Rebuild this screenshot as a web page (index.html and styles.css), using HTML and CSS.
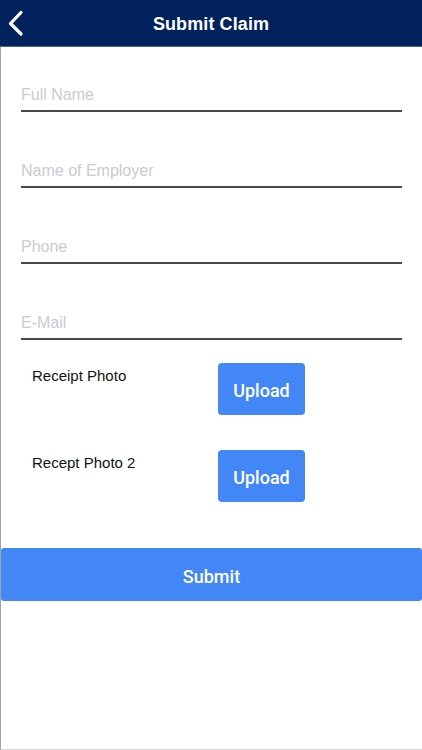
FILE: index.html
```html
<!DOCTYPE html>
<html lang="en">
<head>
<meta charset="utf-8">
<title>Submit Claim</title>
<link rel="stylesheet" href="styles.css">
</head>
<body>
<div class="screen">
  <header class="topbar">
    <button class="back" aria-label="Back">
      <svg width="30" height="46" viewBox="0 0 30 46" aria-hidden="true">
        <polyline points="21,12.5 10.5,23.5 21,34" fill="none" stroke="#ffffff" stroke-width="3.2" stroke-linecap="round" stroke-linejoin="round"/>
      </svg>
    </button>
    <h1 class="title">Submit Claim</h1>
  </header>
  <main class="content">
    <form class="form">
      <div class="field"><input class="input" type="text" placeholder="Full Name"></div>
      <div class="field"><input class="input" type="text" placeholder="Name of Employer"></div>
      <div class="field"><input class="input" type="tel" placeholder="Phone"></div>
      <div class="field"><input class="input" type="email" placeholder="E-Mail"></div>

      <div class="upload-row">
        <span class="upload-label">Receipt Photo</span>
        <button type="button" class="upload-btn">Upload</button>
      </div>
      <div class="upload-row">
        <span class="upload-label">Recept Photo 2</span>
        <button type="button" class="upload-btn">Upload</button>
      </div>

      <button type="button" class="submit-btn">Submit</button>
    </form>
  </main>
</div>
</body>
</html>
```

FILE: styles.css
```css
* { box-sizing: border-box; }

html, body {
  margin: 0;
  padding: 0;
  background: #ffffff;
}

body {
  font-family: "Liberation Sans", Arial, Helvetica, sans-serif;
  color: #111111;
}

.screen {
  width: 422px;
  height: 750px;
  display: flex;
  flex-direction: column;
  overflow: hidden;
}

.topbar {
  height: 47px;
  flex: 0 0 47px;
  background: #01225d;
  border-bottom: 1px solid #4d6490;
  display: flex;
  align-items: center;
  justify-content: center;
  position: relative;
}

.back {
  position: absolute;
  left: 0;
  top: 0;
  width: 30px;
  height: 46px;
  padding: 0;
  border: 0;
  background: transparent;
  display: flex;
}

.title {
  margin: 0;
  padding-top: 2px;
  color: #ffffff;
  font-size: 18px;
  font-weight: 700;
  line-height: 44px;
  letter-spacing: 0.1px;
}

.content {
  flex: 1;
  border-left: 1px solid #a3a3a3;
  border-bottom: 1px solid #d4d4d4;
}

.form {
  display: flex;
  flex-direction: column;
  padding-top: 26px;
}

.field {
  margin: 0 20px 37px 20px;
}

.field:nth-child(4) {
  margin-bottom: 23px;
}

.input {
  display: block;
  width: 100%;
  height: 39px;
  padding: 6px 0 0 0;
  border: 0;
  border-bottom: 2px solid #4a4a4a;
  outline: none;
  background: transparent;
  font-family: "Liberation Sans", Arial, Helvetica, sans-serif;
  font-size: 16px;
  color: #222222;
}

.input::placeholder {
  color: #cbcbcf;
  opacity: 1;
}

.upload-row {
  display: flex;
  align-items: flex-start;
  padding-left: 31px;
  margin-bottom: 35px;
}

.upload-row + .upload-row {
  margin-bottom: 46px;
}

.upload-label {
  width: 186px;
  padding-top: 4px;
  font-size: 15px;
  line-height: 18px;
  color: #111111;
}

.upload-btn {
  width: 87px;
  height: 52px;
  border: 0;
  border-radius: 4px;
  background: #4287f5;
  color: #ffffff;
  font-family: Roboto, "Liberation Sans", Arial, sans-serif;
  font-weight: 500;
  font-size: 18px;
  padding: 2px 0 0 0;
}

.submit-btn {
  display: block;
  width: 100%;
  height: 53px;
  border: 0;
  border-radius: 3px;
  background: #4287f5;
  color: #ffffff;
  font-family: Roboto, "Liberation Sans", Arial, sans-serif;
  font-weight: 500;
  font-size: 18px;
  padding: 3px 0 0 0;
}
```
